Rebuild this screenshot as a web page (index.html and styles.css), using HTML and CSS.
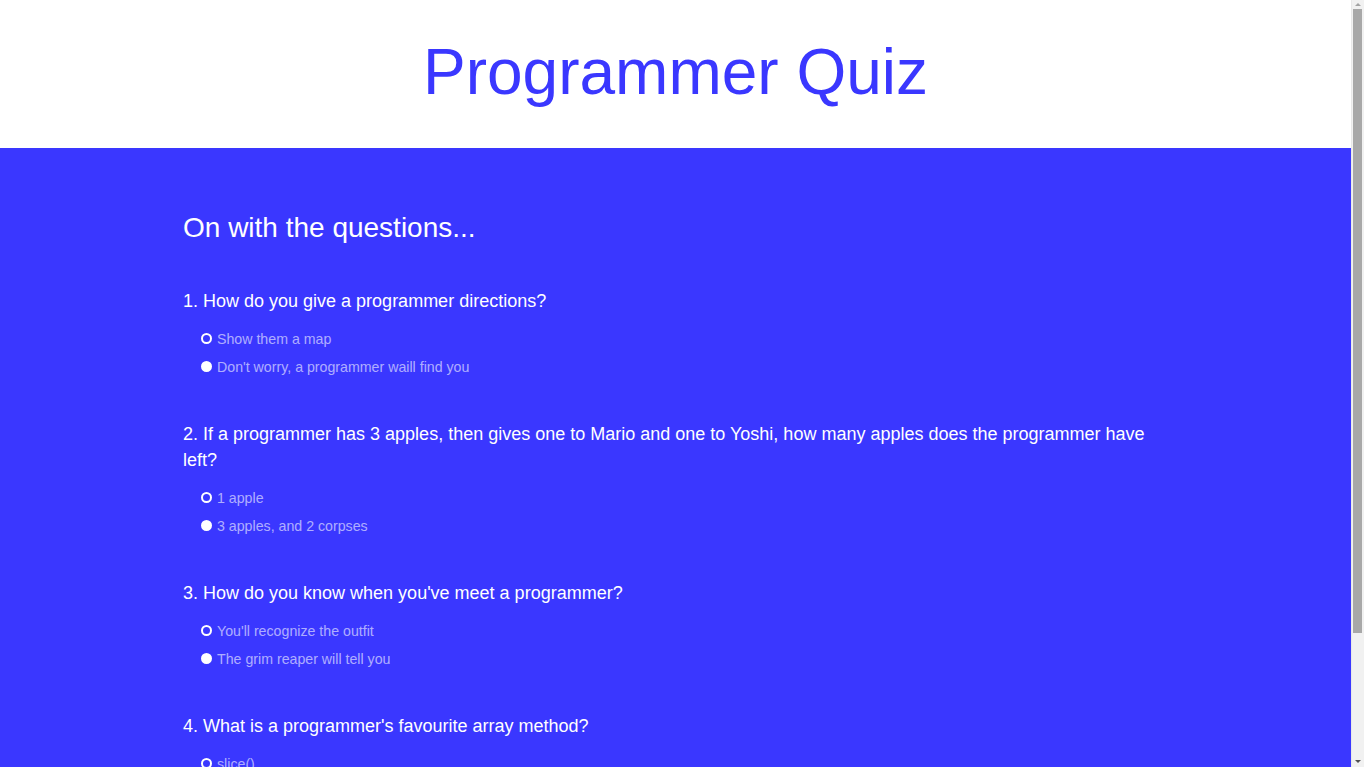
FILE: index.html
```html
<!DOCTYPE html>
<html lang="en">
<head>
<meta charset="utf-8">
<title>Programmer Quiz</title>
<link rel="stylesheet" href="styles.css">
</head>
<body>
<header class="site-header">
  <h1 class="site-title">Programmer Quiz</h1>
</header>
<main class="quiz">
  <div class="quiz-inner">
    <h2 class="quiz-heading">On with the questions...</h2>
    <form class="quiz-form">
      <div class="question">
        <p class="question-text">1. How do you give a programmer directions?</p>
        <label class="option"><input class="radio radio-ring" type="radio" name="q1" value="A">Show them a map</label>
        <label class="option"><input class="radio radio-fill" type="radio" name="q1" value="B">Don't worry, a programmer waill find you</label>
      </div>
      <div class="question">
        <p class="question-text">2. If a programmer has 3 apples, then gives one to Mario and one to Yoshi, how many apples does the programmer have left?</p>
        <label class="option"><input class="radio radio-ring" type="radio" name="q2" value="A">1 apple</label>
        <label class="option"><input class="radio radio-fill" type="radio" name="q2" value="B">3 apples, and 2 corpses</label>
      </div>
      <div class="question">
        <p class="question-text">3. How do you know when you've meet a programmer?</p>
        <label class="option"><input class="radio radio-ring" type="radio" name="q3" value="A">You'll recognize the outfit</label>
        <label class="option"><input class="radio radio-fill" type="radio" name="q3" value="B">The grim reaper will tell you</label>
      </div>
      <div class="question">
        <p class="question-text">4. What is a programmer's favourite array method?</p>
        <label class="option"><input class="radio radio-ring" type="radio" name="q4" value="A">slice()</label>
        <label class="option"><input class="radio radio-fill" type="radio" name="q4" value="B">splice()</label>
      </div>
    </form>
  </div>
</main>
<div class="scrollbar" aria-hidden="true">
  <span class="scroll-arrow scroll-up"></span>
  <span class="scroll-thumb"></span>
  <span class="scroll-arrow scroll-down"></span>
</div>
</body>
</html>
```
FILE: styles.css
```css
html, body {
  margin: 0;
  padding: 0;
}
body {
  font-family: "Liberation Sans", Arial, sans-serif;
  background: #3a37ff;
  padding-right: 13px;
}
.site-header {
  background: #ffffff;
  padding: 36px 0 39px;
  text-align: center;
}
.site-title {
  margin: 0;
  font-size: 64px;
  line-height: 73px;
  font-weight: normal;
  color: #3a37ff;
}
.quiz {
  background: #3a37ff;
  padding: 64px 0 56px;
}
.quiz-inner {
  max-width: 985px;
  margin: 0 auto;
}
.quiz-heading {
  margin: 0 0 44px;
  font-size: 28px;
  line-height: 32px;
  font-weight: normal;
  color: #ffffff;
}
.quiz-form {
  display: flex;
  flex-direction: column;
  gap: 40px;
}
.question {
  display: flex;
  flex-direction: column;
}
.question-text {
  margin: 0 0 11px;
  font-size: 18px;
  line-height: 26px;
  color: #ffffff;
}
.option {
  display: flex;
  align-items: center;
  height: 28px;
  padding-left: 18px;
  font-size: 14.2px;
  color: rgba(255, 255, 255, 0.6);
}
.radio {
  appearance: none;
  -webkit-appearance: none;
  box-sizing: border-box;
  width: 11px;
  height: 11px;
  margin: 0 5px 0 0;
  border-radius: 50%;
  position: relative;
  top: -1px;
}
.radio-ring {
  border: 2px solid #ffffff;
  background: #3a37ff;
}
.radio-fill {
  border: 2px solid #ffffff;
  background: #ffffff;
}

/* simulated browser scrollbar */
.scrollbar {
  position: fixed;
  top: 0;
  right: 0;
  bottom: 0;
  width: 13px;
  background: #f1f1f1;
  border-left: 1px solid #e8e8e8;
  box-sizing: border-box;
}
.scroll-thumb {
  position: absolute;
  top: 9px;
  left: 1px;
  width: 9px;
  height: 624px;
  background: #a8a8a8;
}
.scroll-arrow {
  position: absolute;
  left: 3px;
  width: 0;
  height: 0;
  border-left: 3px solid transparent;
  border-right: 3px solid transparent;
}
.scroll-up {
  top: 3px;
  border-bottom: 3px solid #a3a3a3;
}
.scroll-down {
  bottom: 4px;
  border-top: 3px solid #505050;
}
```
